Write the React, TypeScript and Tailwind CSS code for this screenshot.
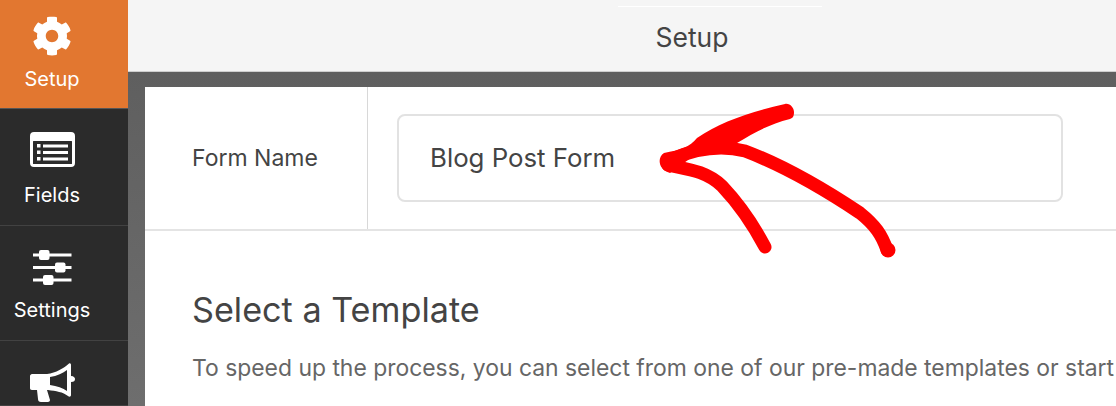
import { FaCog } from "react-icons/fa";

const font = { fontFamily: '"Inter", "Liberation Sans", sans-serif' };

function FieldsIcon() {
  return (
    <svg width="45" height="35" viewBox="0 0 45 35" className="block">
      <path
        fillRule="evenodd"
        fill="#fff"
        d="M4 0h37a4 4 0 0 1 4 4v27a4 4 0 0 1-4 4H4a4 4 0 0 1-4-4V4a4 4 0 0 1 4-4ZM3.5 9a.5.5 0 0 0-.5.5v22a.5.5 0 0 0 .5.5h38a.5.5 0 0 0 .5-.5v-22a.5.5 0 0 0-.5-.5H3.5Z"
      />
      <rect x="7" y="12" width="3.5" height="3.5" fill="#fff" />
      <rect x="7" y="18.5" width="3.5" height="3.5" fill="#fff" />
      <rect x="7" y="25" width="3.5" height="3.5" fill="#fff" />
      <rect x="13" y="12.5" width="25" height="3" fill="#fff" />
      <rect x="13" y="19" width="25" height="3" fill="#fff" />
      <rect x="13" y="25.5" width="25" height="3" fill="#fff" />
    </svg>
  );
}

function SlidersIcon() {
  return (
    <svg width="39" height="35" viewBox="0 0 39 35" className="block" fill="#fff">
      <rect x="0" y="3.5" width="38.5" height="3" />
      <rect x="0" y="16" width="38.5" height="3" />
      <rect x="0" y="28.5" width="38.5" height="3" />
      <rect x="6" y="0" width="10.5" height="10" rx="2" />
      <rect x="22" y="12.5" width="10.5" height="10" rx="2" />
      <rect x="10" y="25" width="10.5" height="10" rx="2" />
    </svg>
  );
}

function BullhornIcon() {
  return (
    <svg width="45" height="39" viewBox="0 0 45 39" className="block">
      <path
        fill="#fff"
        fillRule="evenodd"
        d="M2 11H17C26 10 34 5 39 .5C40.500 0 41 1 41 2V13C44 13 45 15 45 16C45 18 44 19 41 19V32C41 34 39 34 38 33C33 29 26 28 18 27L17 27L20 37C20 38 19 39 18 39H11C9 39 8 38 8 36L7 27H2C.5 27 0 26 0 25V13C0 12 1 11 2 11ZM20 14C27 13 33 10 37 7V28C33 25 27 23 20 22Z"
      />
    </svg>
  );
}

function Arrow() {
  return (
    <svg
      width="260"
      height="170"
      viewBox="650 95 260 170"
      className="absolute left-[650px] top-[95px]"
    >
      <path
        fill="#ff0000"
        d="M664 153C680 150 690 147 697 138C720 122 750 112 785 104C790 103 794 108 794 112C794 116 793 118 790 119C770 124 755 132 737 143C720 148 700 150 688 160L670 173C658 170 657 157 664 153Z"
      />
      <path
        fill="none"
        stroke="#ff0000"
        strokeWidth="13"
        strokeLinecap="round"
        d="M672 159C700 147 725 146 745 151C790 168 830 193 860 213C875 225 882 235 887 250"
      />
      <path
        fill="none"
        stroke="#ff0000"
        strokeWidth="13"
        strokeLinecap="round"
        d="M668 165C685 169 705 170 722 186C740 205 755 228 765 247"
      />
      <circle cx="888" cy="250" r="7.500" fill="#ff0000" />
    </svg>
  );
}

function NavItem({
  label,
  active,
  icon,
  h,
}: {
  label: string;
  active?: boolean;
  icon: React.ReactNode;
  h: string;
}) {
  return (
    <div
      className={`${h} shrink-0 flex flex-col items-center pr-[24px] border-b ${
        active ? "bg-[#e27730] border-[#555]" : "bg-[#2b2b2b] border-[#424242]"
      }`}
    >
      {icon}
      {label ? <span className="text-white text-[20px] leading-[24px]">{label}</span> : null}
    </div>
  );
}

export default function App() {
  return (
    <div className="relative flex w-[1116px] h-[406px] overflow-hidden bg-white" style={font}>
      <aside className="w-[128px] shrink-0 flex flex-col bg-[#2b2b2b]">
        <NavItem
          active
          label="Setup"
          h="h-[109px]"
          icon={<div className="h-[67px] pt-[16px]"><FaCog size={40} color="#fff" /></div>}
        />
        <NavItem
          label="Fields"
          h="h-[117px]"
          icon={<div className="h-[74px] pt-[23px]"><FieldsIcon /></div>}
        />
        <NavItem
          label="Settings"
          h="h-[115px]"
          icon={<div className="h-[72px] pt-[24px]"><SlidersIcon /></div>}
        />
        <NavItem
          label=""
          h="h-[65px]"
          icon={<div className="pt-[22px]"><BullhornIcon /></div>}
        />
      </aside>
      <main className="flex-1 min-w-0 flex flex-col">
        <header className="relative h-[72px] shrink-0 bg-[#f5f5f5] border-b border-[#cfcfcf] flex items-center justify-center pl-[140px]">
          <div className="absolute top-[6px] left-[490px] w-[204px] h-px bg-white" />
          <span className="text-[#444] text-[26.500px] leading-none relative top-[2px]">Setup</span>
        </header>
        <div className="flex-1 min-h-0 bg-gradient-to-b from-[#5f5f5f] to-[#6e6e6e] pt-[15px] pl-[17px]">
          <div className="h-full bg-white">
            <div className="flex h-[144px] border-b-2 border-[#e4e4e4]">
              <div className="w-[223px] shrink-0 border-r border-[#d8d8d8] pl-[47px] flex items-center">
                <span className="text-[#444] text-[23px]">Form Name</span>
              </div>
              <div className="flex-1 pl-[29px] pt-[27px]">
                <div className="w-[666px] h-[88px] border-2 border-[#e2e2e2] rounded-[8px] flex items-center pl-[31px]">
                  <span className="text-[#444] text-[25.800px]">Blog Post Form</span>
                </div>
              </div>
            </div>
            <div className="pl-[47px] pt-[55px] whitespace-nowrap">
              <h1 className="text-[#444] text-[34.200px] leading-[48px]">Select a Template</h1>
              <p className="text-[#666] text-[22.900px] leading-[32px] mt-[18px]">
                To speed up the process, you can select from one of our pre-made templates or start
              </p>
            </div>
          </div>
        </div>
      </main>
      <Arrow />
    </div>
  );
}
